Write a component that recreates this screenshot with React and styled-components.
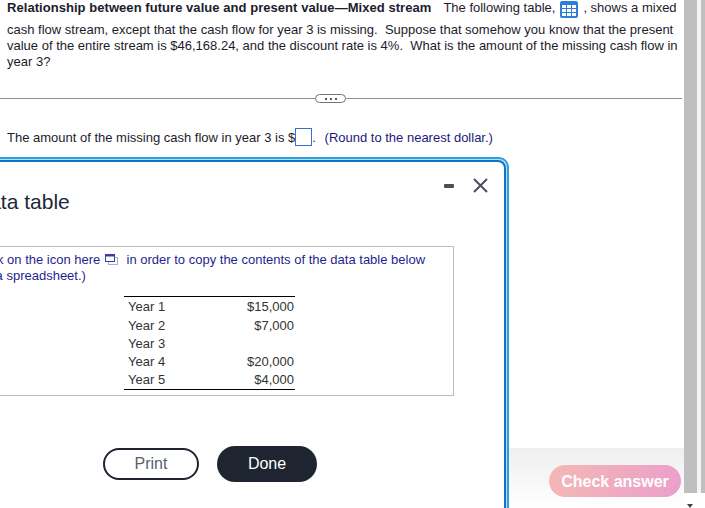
import React from "react";
import styled, { createGlobalStyle } from "styled-components";

const rows = [
  ["Year 1", "$15,000"],
  ["Year 2", "$7,000"],
  ["Year 3", ""],
  ["Year 4", "$20,000"],
  ["Year 5", "$4,000"]
];

export default function App() {
  return (
    <Page>
      <GlobalStyle />
      <Content>
        <Question>
          <Lead>
            <LeadTitle>Relationship between future value and present value—Mixed stream</LeadTitle>
            <LeadRest>The following table,</LeadRest>
            <GridIcon />
            <span>, shows a mixed</span>
          </Lead>
          <Body>
            cash flow stream, except that the cash flow for year 3 is missing.&nbsp; Suppose that somehow you know that the
            present value of the entire stream is $46,168.24, and the discount rate is 4%.&nbsp; What is the amount of the
            missing cash flow in year 3?
          </Body>
        </Question>
        <Divider>
          <Pill>
            <i />
            <i />
            <i />
          </Pill>
        </Divider>
        <Answer>
          The amount of the missing cash flow in year 3 is $<AnswerInput />. <Hint>(Round to the nearest dollar.)</Hint>
        </Answer>
        <Footer>
          <CheckButton>Check answer</CheckButton>
        </Footer>
        <Modal>
          <ModalInner>
            <ModalHeader>
              <ModalTitle>Data table</ModalTitle>
              <Controls>
                <Minimize />
                <CloseIcon />
              </Controls>
            </ModalHeader>
            <Notice>
              <NoticeText>
                (Click on the icon here <CopyIcon /> in order to copy the contents of the data table below into a
                spreadsheet.)
              </NoticeText>
              <DataTable>
                <tbody>
                  {rows.map(([year, amount]) => (
                    <tr key={year}>
                      <YearCell>{year}</YearCell>
                      <AmountCell>{amount}</AmountCell>
                    </tr>
                  ))}
                </tbody>
              </DataTable>
            </Notice>
            <Buttons>
              <PrintButton>Print</PrintButton>
              <DoneButton>Done</DoneButton>
            </Buttons>
          </ModalInner>
        </Modal>
      </Content>
      <Scrollbar>
        <ScrollTrack />
        <ScrollGap />
        <ScrollTrack />
        <ScrollArrow />
      </Scrollbar>
    </Page>
  );
}

function GridIcon() {
  return (
    <GridSvg viewBox="0 0 18 17">
      <rect width="18" height="17" rx="2" fill="#2f7ed8" />
      <g fill="#fff">
        {[4, 8, 12].map(y =>
          [2, 7, 12].map(x => <rect key={`${x}-${y}`} x={x} y={y} width="4" height="3" />)
        )}
      </g>
    </GridSvg>
  );
}

function CopyIcon() {
  return (
    <CopySvg viewBox="0 0 13 11" fill="none">
      <rect x="3.5" y="3.5" width="9" height="7" stroke="#a9a9d6" />
      <rect x="0.5" y="0.5" width="9" height="7" fill="#fff" stroke="#3d3d9e" />
      <rect x="1" y="1" width="8" height="1.5" fill="#3d3d9e" />
    </CopySvg>
  );
}

function CloseIcon() {
  return (
    <CloseSvg viewBox="0 0 15 15" fill="none">
      <path d="M1 1L14 14M14 1L1 14" stroke="#4a4f5a" strokeWidth="2" />
    </CloseSvg>
  );
}

const GlobalStyle = createGlobalStyle`
  html, body {
    margin: 0;
    padding: 0;
    background: #fff;
    overflow: hidden;
  }
  body {
    font-family: "Liberation Sans", Arial, sans-serif;
  }
`;

const Page = styled.div`
  display: flex;
  width: 705px;
  height: 508px;
  overflow: hidden;
  font-size: 13px;
  line-height: 16px;
  color: #1c1c2c;
`;

const Content = styled.div`
  position: relative;
  width: 684px;
  flex: none;
`;

const Question = styled.div`
  padding: 0 4px 0 7px;
  height: 90px;
`;

const Lead = styled.div`
  display: flex;
  align-items: center;
  height: 16px;
  white-space: nowrap;
  margin-bottom: 6px;
`;

const LeadTitle = styled.strong`
  letter-spacing: 0.05px;
`;

const LeadRest = styled.span`
  margin-left: 12px;
`;

const Body = styled.div``;

const GridSvg = styled.svg`
  width: 18px;
  height: 17px;
  margin: 2px 5px 0 5px;
  flex: none;
`;

const Divider = styled.div`
  position: relative;
  margin-top: 8px;
  width: 682px;
  height: 1px;
  background: #8b909c;
`;

const Pill = styled.div`
  position: absolute;
  left: 315px;
  top: -4px;
  width: 31px;
  height: 9px;
  box-sizing: border-box;
  border: 1px solid #6f7480;
  border-radius: 5px;
  background: #fff;
  display: flex;
  align-items: center;
  justify-content: center;
  gap: 3px;
  i {
    width: 2px;
    height: 2px;
    background: #555a66;
  }
`;

const Answer = styled.div`
  margin-top: 30px;
  padding-left: 7px;
  display: flex;
  align-items: center;
  height: 18px;
  white-space: pre;
`;

const AnswerInput = styled.span`
  width: 17px;
  height: 18px;
  margin-top: -2px;
  box-sizing: border-box;
  border: 1px solid #3b6fc9;
`;

const Hint = styled.span`
  margin-left: 5px;
  color: #1a1a7a;
`;

const Footer = styled.div`
  position: absolute;
  left: 509px;
  top: 448px;
  width: 175px;
  height: 60px;
  box-sizing: border-box;
  padding: 17px 0 0 40px;
  background: linear-gradient(#efefef, #fff);
`;

const CheckButton = styled.div`
  width: 132px;
  height: 32px;
  border-radius: 16px;
  background: linear-gradient(100deg, #f4b8b4, #eb9fcb);
  color: #fff;
  font-size: 16px;
  font-weight: 700;
  line-height: 33px;
  text-align: center;
`;

const Modal = styled.div`
  position: absolute;
  left: -60px;
  top: 157px;
  width: 569px;
  height: 420px;
  box-sizing: border-box;
  padding: 1px;
  border: 2px solid #2d9fe0;
  border-radius: 10px 10px 0 0;
  background: #b9def5;
`;

const ModalInner = styled.div`
  height: 100%;
  box-sizing: border-box;
  border: 2px solid #0f75c2;
  border-radius: 8px 8px 0 0;
  background: #fff;
  padding-left: 24px;
`;

const ModalHeader = styled.div`
  display: flex;
  justify-content: space-between;
  height: 84px;
`;

const ModalTitle = styled.h2`
  margin: 27px 0 0 5px;
  font-size: 21px;
  font-weight: 400;
  line-height: 26px;
  color: #20283a;
`;

const Controls = styled.div`
  display: flex;
  align-items: flex-start;
  gap: 19px;
  padding: 16px 16px 0 0;
`;

const Minimize = styled.span`
  width: 10px;
  height: 4px;
  margin-top: 6px;
  border-radius: 1px;
  background: #4a4f5a;
`;

const CloseSvg = styled.svg`
  width: 15px;
  height: 15px;
`;

const Notice = styled.div`
  width: 482px;
  height: 150px;
  margin-left: 3px;
  box-sizing: border-box;
  border: 1px solid #bdbdbd;
  padding: 5px 12px 0 0;
`;

const NoticeText = styled.div`
  margin-left: -2px;
  color: #1f1f8f;
`;

const CopySvg = styled.svg`
  width: 13px;
  height: 11px;
  margin: 0 5px 0 1px;
  vertical-align: -1px;
`;

const DataTable = styled.table`
  margin: 12px 0 0 151px;
  width: 171px;
  border-collapse: collapse;
  border-top: 1px solid #000;
  border-bottom: 1px solid #000;
  color: #333;
  td {
    padding: 0;
    height: 18px;
  }
  tr:nth-child(-n + 2) td {
    padding-top: 1px;
  }
`;

const YearCell = styled.td`
  padding-left: 4px !important;
`;

const AmountCell = styled.td`
  text-align: right;
  padding-right: 1px !important;
`;

const Buttons = styled.div`
  display: flex;
  align-items: center;
  gap: 18px;
  margin: 50px 0 0 134px;
`;

const PrintButton = styled.div`
  width: 96px;
  height: 32px;
  box-sizing: border-box;
  border: 2px solid #1e2530;
  border-radius: 16px;
  color: #5a5f6a;
  font-size: 16px;
  line-height: 28px;
  text-align: center;
`;

const DoneButton = styled.div`
  width: 100px;
  height: 36px;
  border-radius: 18px;
  background: #1e2530;
  color: #fff;
  font-size: 16px;
  line-height: 36px;
  text-align: center;
`;

const Scrollbar = styled.div`
  position: relative;
  flex: 1;
  display: flex;
  height: 493px;
`;

const ScrollTrack = styled.div`
  flex: 1;
  background: #bfbfbf;
  &:first-child {
    flex: none;
    width: 13px;
  }
`;

const ScrollGap = styled.div`
  width: 4px;
  background: #f4f4f4;
`;

const ScrollArrow = styled.div`
  position: absolute;
  left: 3px;
  top: 504px;
  border-left: 3px solid transparent;
  border-right: 3px solid transparent;
  border-top: 4px solid #444;
`;
